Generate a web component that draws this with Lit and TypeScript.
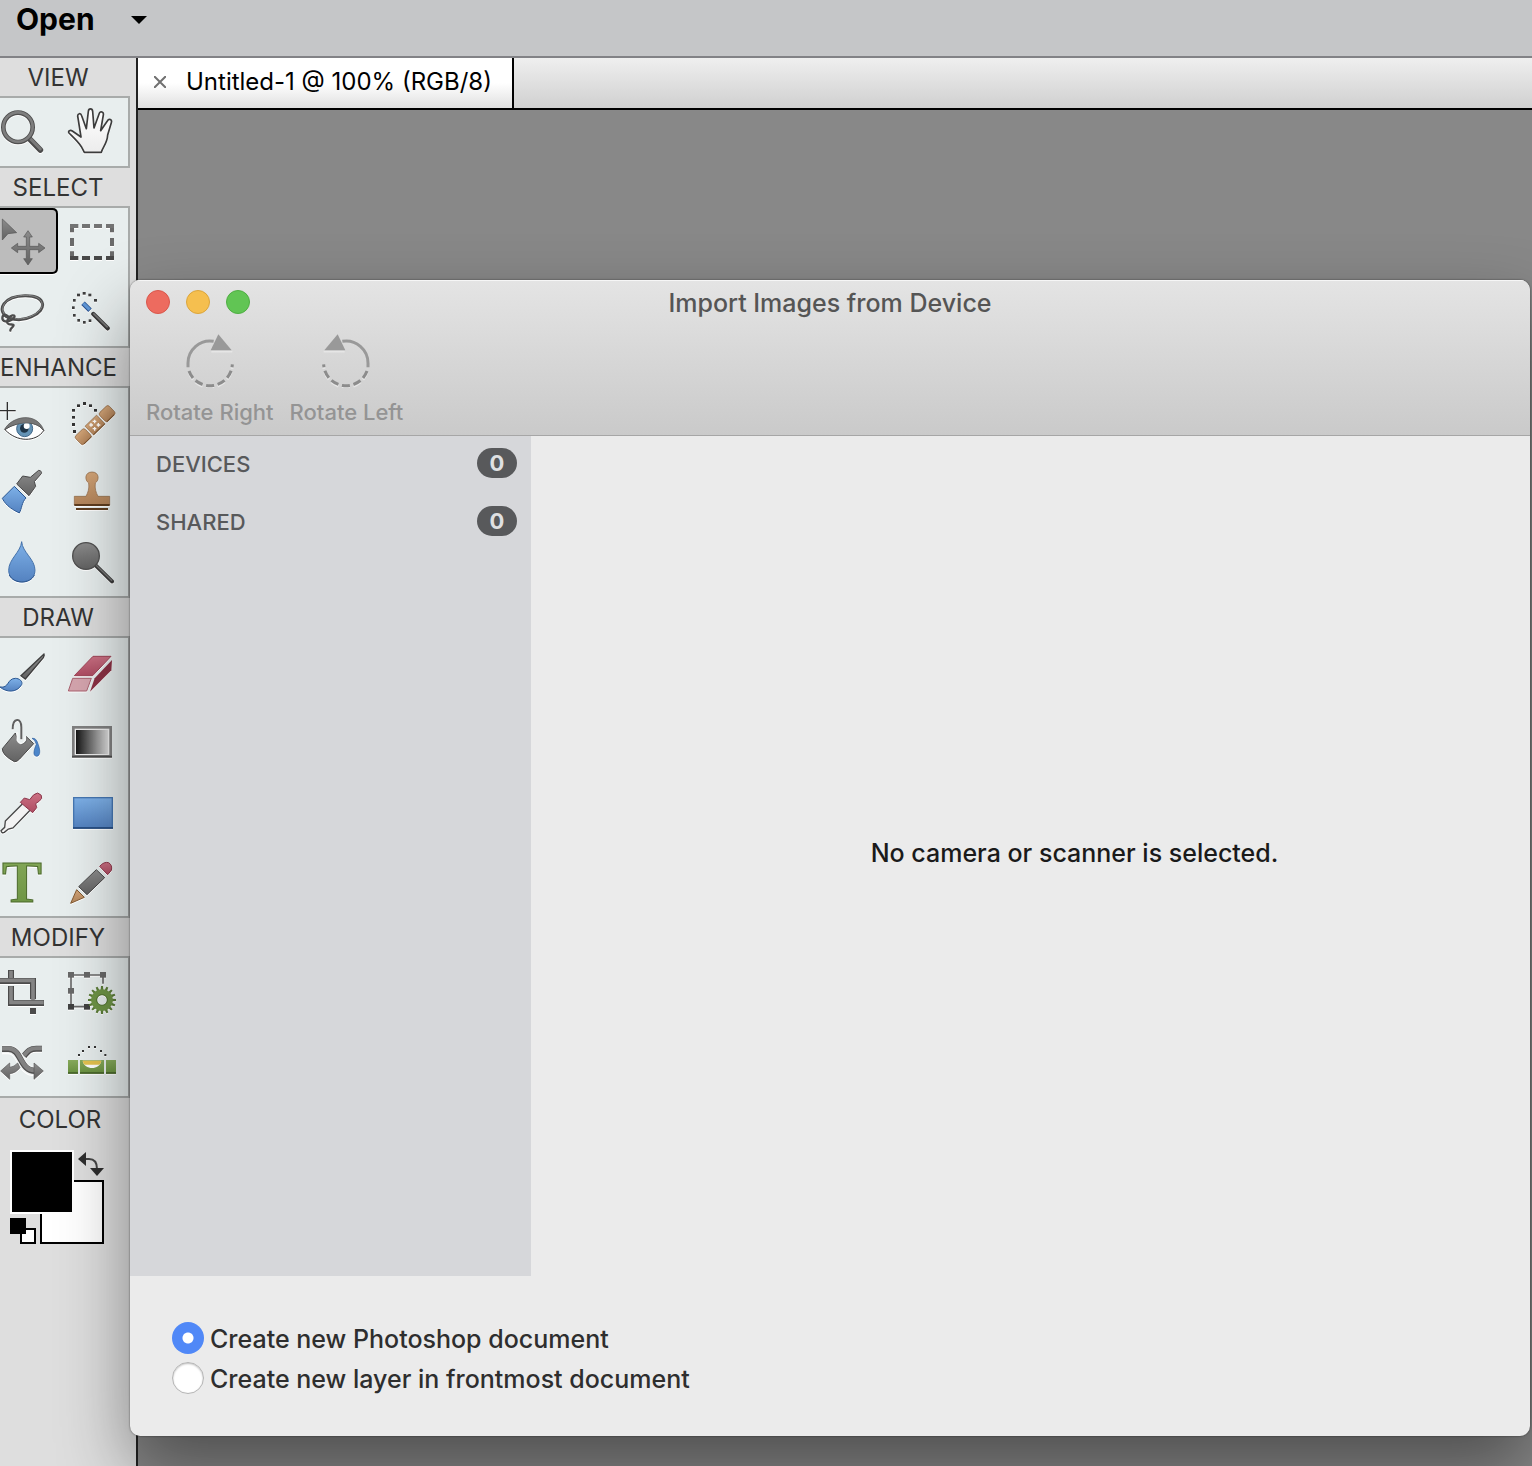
import { LitElement, html, svg, css, TemplateResult, SVGTemplateResult } from "lit";
import { customElement, property, state } from "lit/decorators.js";
import { classMap } from "lit/directives/class-map.js";

interface Tool {
  name: string;
  art: SVGTemplateResult;
}

interface ToolGroup {
  label: string;
  tops: number[];
  tools: Tool[];
}

/* Tool artwork is drawn at three units per pixel. */
const zoomTool = svg`
  <path d="M89 147 L121 180" stroke="#4b4b4b" stroke-width="17" stroke-linecap="round"/>
  <path d="M90 145 L121 177" stroke="#7a7a7a" stroke-width="9" stroke-linecap="round"/>
  <circle cx="54" cy="112" r="44" fill="none" stroke="#4f4f4f" stroke-width="14"/>
  <circle cx="54" cy="111" r="44" fill="none" stroke="#7e7e7e" stroke-width="8"/>`;

const handTool = svg`
  <path fill="url(#paper)" stroke="#3c3c3c" stroke-width="5" stroke-linejoin="round"
    d="M253 187 L244 170 C232 152 219 141 207 129 C203 123 211 119 217 123 L243 141 L233 78 C233 70 242 68 245 77 L259 116 L265 64 C266 54 277 54 278 64 L282 114 L298 70 C301 62 312 66 310 75 L302 122 L322 93 C327 84 337 89 334 98 L323 135 C322 160 308 171 304 187 Z"/>`;

const moveTool = svg`
  <path d="M-20 357 H157 Q171 357 171 371 V535 Q171 549 157 549 H-20 Z" fill="#bcbcbc" stroke="#000" stroke-width="6"/>
  <path d="M7 387 L50 428 L24 431 L7 450 Z" fill="url(#gray)" stroke="#555" stroke-width="2"/>
  <path d="M84 422 L97 441 H89 V469 H116 V460 L135 474 L116 488 V479 H89 V506 H97 L84 525 L71 506 H79 V479 H53 V488 L34 474 L53 460 V469 H79 V441 H71 Z" fill="url(#gray)" stroke="#555" stroke-width="2"/>`;

const marqueeTool = svg`
  <g fill="none" stroke-width="12">
    <path d="M216 402 V427 M216 444 V468 M216 484 V505 M336 402 V427 M336 444 V468 M336 484 V505" stroke="#6a6a6a"/>
    <path d="M210 408 H235 M246 408 H270 M282 408 H306 M318 408 H342" stroke="#737373"/>
    <path d="M210 504 H235 M246 504 H270 M282 504 H306 M318 504 H342" stroke="#484848"/>
  </g>`;

const lassoTool = svg`
  <g fill="none" stroke-linecap="round">
    <path d="M20 680 C-10 660 10 618 75 617 C140 616 143 660 95 680 C70 692 45 690 28 684" stroke="#4d4d4d" stroke-width="9"/>
    <path d="M20 679 C-8 660 12 617 75 616 C138 615 141 658 95 678 C70 690 45 688 28 682" stroke="#858585" stroke-width="3"/>
    <path d="M28 684 C20 672 8 672 7 684 C7 696 22 697 34 690 C47 682 46 675 37 676 C28 678 18 692 23 700 C28 707 44 700 40 708 C37 714 30 716 31 722" stroke="#4d4d4d" stroke-width="7"/>
  </g>`;

const wandTool = svg`
  <g fill="#3e3e3e">
    <rect x="248" y="606" width="9" height="8"/><rect x="265" y="611" width="9" height="8"/><rect x="282" y="627" width="9" height="8"/>
    <rect x="231" y="611" width="9" height="8"/><rect x="219" y="627" width="8" height="8"/><rect x="216" y="649" width="8" height="8"/>
    <rect x="219" y="672" width="8" height="8"/><rect x="232" y="687" width="8" height="8"/><rect x="249" y="693" width="8" height="8"/><rect x="266" y="688" width="8" height="8"/>
  </g>
  <path d="M249 640 L270 661" stroke="#2c5590" stroke-width="15"/><path d="M250 640 L269 659" stroke="#5f96d6" stroke-width="9"/>
  <path d="M280 672 L323 715" stroke="#3b3b3b" stroke-width="13" stroke-linecap="round"/><path d="M280 670 L323 712" stroke="#777" stroke-width="5"/>`;

const eyeTool = svg`
  <path d="M0 197 H47 M22 171 V225" stroke="#2f2f2f" stroke-width="4"/>
  <path d="M15 254 C45 232 105 220 131 257 C108 292 50 292 15 254 Z" fill="#fff" stroke="#333" stroke-width="3"/>
  <circle cx="74" cy="251" r="24" fill="#6493b5" stroke="#41688a" stroke-width="3"/>
  <circle cx="73" cy="250" r="13" fill="#1f3547"/><circle cx="80" cy="243" r="9" fill="#fff"/>
  <path d="M13 254 C35 213 110 198 132 257 C108 224 50 230 13 254 Z" fill="#777" stroke="#555" stroke-width="2"/>`;

const bandageTool = svg`
  <g fill="#333">
    <rect x="249" y="171" width="9" height="9"/><rect x="267" y="178" width="9" height="8"/><rect x="282" y="192" width="9" height="8"/>
    <rect x="231" y="178" width="9" height="8"/><rect x="216" y="192" width="9" height="8"/><rect x="216" y="213" width="9" height="8"/>
    <rect x="216" y="234" width="9" height="9"/><rect x="219" y="255" width="9" height="9"/>
  </g>
  <g transform="translate(285 240) rotate(-44)">
    <rect x="-70" y="-17" width="40" height="35" rx="7" fill="url(#tan)" stroke="#8b6038" stroke-width="2"/>
    <rect x="-24" y="-18" width="48" height="36" fill="url(#tan)" stroke="#8b6038" stroke-width="2"/>
    <rect x="30" y="-17" width="40" height="35" rx="7" fill="url(#tan)" stroke="#8b6038" stroke-width="2"/>
    <path d="M-63 18 H-31 M-24 18 H24 M31 18 H63" stroke="#7d5530" stroke-width="3"/>
  </g>
  <path d="M268 240 H279 M273 234 V245 M290 240 H301 M295 234 V245 M278 229 H289 M284 224 V235 M278 251 H289 M284 246 V257" stroke="#fff" stroke-width="4"/>`;

const smartBrushTool = svg`
  <path d="M116 376 Q127 378 124 386 L103 410 L107 424 L87 452 L50 417 L68 393 L91 397 Z" fill="url(#gray)" stroke="#484848" stroke-width="3"/>
  <path d="M43 424 L78 459 C65 472 66 490 58 504 C42 496 18 484 7 460 Z" fill="url(#blue)" stroke="#29558f" stroke-width="3"/>`;

const stampTool = svg`
  <path d="M276 381 C298 381 299 406 286 414 C284 432 288 442 294 454 H329 V480 H223 V454 H258 C264 442 268 432 266 414 C253 406 254 381 276 381 Z" fill="url(#tan)" stroke="#8a6240" stroke-width="2"/>
  <path d="M223 480 H329 M228 492 H324" stroke="#5f3d1f" stroke-width="6"/>`;

const dropTool = svg`
  <path d="M65 590 C67 622 105 642 105 676 C105 722 26 722 26 676 C26 642 62 622 65 590 Z" fill="url(#blue)" stroke="#416fa8" stroke-width="3"/>
  <path d="M28 690 C40 718 92 718 103 690" fill="none" stroke="#29538c" stroke-width="3"/>`;

const dodgeTool = svg`
  <path d="M284 658 L336 709" stroke="#3b3b3b" stroke-width="12" stroke-linecap="round"/><path d="M284 656 L336 707" stroke="#777" stroke-width="4"/>
  <circle cx="258" cy="633" r="40" fill="url(#gray)" stroke="#505050" stroke-width="4"/>`;

const brushTool = svg`
  <path d="M132 162 Q134 165 130 173 L76 237 L63 227 Z" fill="url(#gray)" stroke="#3e3e3e" stroke-width="4"/>
  <path d="M0 261 C28 266 20 236 46 235 C58 235 69 244 65 254 C50 280 18 277 0 261 Z" fill="url(#blue)" stroke="#29558f" stroke-width="3"/>`;

const eraserTool = svg`
  <path d="M279 169 H333 L278 227 H223 Z" fill="url(#rose)" stroke="#9e4355" stroke-width="3"/>
  <path d="M218 235 H274 L260 273 H205 Z" fill="#d5a5ae" stroke="#a8606e" stroke-width="3"/>
  <path d="M336 180 L284 235 L270 275 L334 211 Z" fill="#8c3144"/>`;

const bucketTool = svg`
  <path d="M46 399 L7 446 Q6 465 43 485 Q51 486 59 477 L101 431 L78 409 V424 Q64 440 54 424 Z" fill="url(#gray)" stroke="#474747" stroke-width="3"/>
  <path d="M52 396 V420 Q63 440 76 420 V408" fill="none" stroke="#f3f6f6" stroke-width="5"/>
  <path d="M38 388 C38 352 65 352 64 382 V418" fill="none" stroke="#606060" stroke-width="6"/>
  <path d="M96 415 Q109 413 114 432 C120 447 123 468 110 469 C96 468 103 447 109 433 Q106 421 96 415 Z" fill="#4c86ca" stroke="#2c5c9b" stroke-width="2"/>`;

const gradientTool = svg`
  <rect x="220" y="382" width="112" height="87" fill="#eee" stroke="#808080" stroke-width="8"/>
  <path d="M216 470 H336" stroke="#4c4c4c" stroke-width="5"/>
  <rect x="228" y="390" width="96" height="72" fill="url(#ramp)"/>`;

const eyedropperTool = svg`
  <path d="M67 612 L16 663 L14 682 L3 692 Q5 701 13 697 L25 687 L39 684 L90 631" fill="#f3f3f3" stroke="#454545" stroke-width="4"/>
  <path d="M61 607 L73 594 L89 599 Q101 580 113 579 Q128 584 125 595 Q120 604 107 611 L110 623 L98 638 Z" fill="url(#rose)" stroke="#89364a" stroke-width="3"/>`;

const shapeTool = svg`
  <rect x="221" y="593" width="116" height="91" fill="url(#blue)" stroke="#4677b2" stroke-width="4"/>
  <path d="M219 684 H339" stroke="#1f4378" stroke-width="5"/>`;

const typeTool = svg`<text x="66" y="906" text-anchor="middle" class="type-letter" fill="url(#green)">T</text>`;

const pencilTool = svg`
  <path d="M299 799 Q312 784 326 788 Q338 796 334 811 L323 824 Z" fill="url(#rose)" stroke="#8e3549" stroke-width="3"/>
  <path d="M289 809 L314 833 L261 884 L236 860 Z" fill="url(#gray)" stroke="#454545" stroke-width="3"/>
  <path d="M230 869 L253 892 L212 910 Z" fill="url(#tan)" stroke="#82592f" stroke-width="3"/>`;

const cropTool = svg`
  <g fill="none" stroke="#4b4b4b" stroke-width="18"><path d="M33 165 V189 M0 198 H99 V253 M33 213 V264 H132 M90 288 H108"/></g>
  <g fill="none" stroke="#848484" stroke-width="11"><path d="M33 167 V189 M0 196 H99 V255 M33 214 V262 H131"/></g>`;

const gearTeeth = Array.from({ length: 16 }, (_, i) => i * 22.5);
const recomposeTool = svg`
  <path d="M213 180 H309 V206 M213 180 V275 H262" fill="none" stroke="#686868" stroke-width="5"/>
  <g fill="#686868"><rect x="204" y="171" width="18" height="17"/><rect x="252" y="171" width="18" height="17"/><rect x="300" y="171" width="18" height="17"/><rect x="204" y="219" width="18" height="17"/></g>
  <g fill="#414141"><rect x="204" y="267" width="18" height="17"/><rect x="252" y="267" width="18" height="17"/></g>
  ${gearTeeth.map((a) => svg`<path d="M302 226 L303 213 H309 L310 226 Z" fill="#5c7d39" transform="rotate(${a} 306 255)"/>`)}
  <circle cx="306" cy="255" r="24" fill="none" stroke="#6e9446" stroke-width="17"/>
  <circle cx="306" cy="255" r="16" fill="none" stroke="#4f702e" stroke-width="3"/>`;

const moveAwareTool = svg`
  <path d="M126 401 H109 C88 401 82 411 72 423" fill="none" stroke="#4e4e4e" stroke-width="18"/>
  <path d="M126 400 H109 C88 400 82 410 72 421" fill="none" stroke="#828282" stroke-width="12"/>
  <path d="M6 402 H25 C66 402 58 468 106 468" fill="none" stroke="#f0f3f3" stroke-width="26"/>
  <path d="M6 402 H25 C66 402 58 468 106 468" fill="none" stroke="#4e4e4e" stroke-width="18"/>
  <path d="M6 400 H25 C66 400 58 466 106 466" fill="none" stroke="#828282" stroke-width="13"/>
  <path d="M102 444 L130 468 L102 493 Z" fill="url(#gray)" stroke="#555" stroke-width="2"/>
  <path d="M29 444 V457 Q43 456 53 444 L60 458 Q48 474 29 476 V493 L2 468 Z" fill="url(#gray)" stroke="#555" stroke-width="2"/>`;

const straightenTool = svg`
  <g fill="#333"><rect x="234" y="417" width="6" height="6"/><rect x="246" y="405" width="6" height="6"/><rect x="264" y="393" width="6" height="6"/><rect x="282" y="393" width="6" height="6"/><rect x="300" y="405" width="6" height="6"/><rect x="313" y="417" width="6" height="6"/></g>
  <g fill="url(#green)"><rect x="204" y="435" width="30" height="41"/><rect x="240" y="435" width="72" height="41"/><rect x="318" y="435" width="30" height="41"/></g>
  <path d="M204 474 H234 M240 474 H312 M318 474 H348" stroke="#435f27" stroke-width="5"/>
  <path d="M248 437 H304 C299 466 253 466 248 437 Z" fill="#fff"/>
  <path d="M248 437 H304 Q303 446 298 449 H254 Q249 444 248 437 Z" fill="#e5c34f"/>`;

const groups: ToolGroup[] = [
  { label: "VIEW", tops: [24], tools: [{ name: "Zoom", art: zoomTool }, { name: "Hand", art: handTool }] },
  {
    label: "SELECT",
    tops: [354, 564],
    tools: [
      { name: "Move", art: moveTool },
      { name: "Marquee", art: marqueeTool },
      { name: "Lasso", art: lassoTool },
      { name: "Quick Selection", art: wandTool },
    ],
  },
  {
    label: "ENHANCE",
    tops: [129, 339, 549],
    tools: [
      { name: "Red Eye Removal", art: eyeTool },
      { name: "Spot Healing", art: bandageTool },
      { name: "Smart Brush", art: smartBrushTool },
      { name: "Clone Stamp", art: stampTool },
      { name: "Blur", art: dropTool },
      { name: "Dodge", art: dodgeTool },
    ],
  },
  {
    label: "DRAW",
    tops: [114, 324, 534, 744],
    tools: [
      { name: "Brush", art: brushTool },
      { name: "Eraser", art: eraserTool },
      { name: "Paint Bucket", art: bucketTool },
      { name: "Gradient", art: gradientTool },
      { name: "Color Picker", art: eyedropperTool },
      { name: "Shape", art: shapeTool },
      { name: "Type", art: typeTool },
      { name: "Pencil", art: pencilTool },
    ],
  },
  {
    label: "MODIFY",
    tops: [129, 339],
    tools: [
      { name: "Crop", art: cropTool },
      { name: "Recompose", art: recomposeTool },
      { name: "Content-Aware Move", art: moveAwareTool },
      { name: "Straighten", art: straightenTool },
    ],
  },
];

@customElement("tool-panel")
export class ToolPanel extends LitElement {
  static styles = css`
    :host { display: block; background: #dedede; border-right: 2px solid #222; box-sizing: border-box; font-family: Inter, "Liberation Sans", sans-serif; }
    button { appearance: none; border: 0; padding: 0; margin: 0; background: none; font: inherit; }
    svg { display: block; }
    .defs { position: absolute; width: 0; height: 0; }
    .label { margin: 0; padding-right: 20px; height: 38px; line-height: 40px; font-size: 24px; font-weight: 400; text-align: center; color: #333; }
    .label.color { height: 42px; line-height: 44px; padding-right: 16px; }
    .tools { display: grid; grid-template-columns: 58px 70px; grid-auto-rows: 68px; row-gap: 2px; margin-right: 6px; border: 2px solid #a8abaa; border-left: 0; background: #e8eeee; overflow: hidden; }
    .tool { display: block; height: 68px; }
    .tool svg { width: 100%; height: 68px; filter: drop-shadow(0 1px 0 #fff); }
    .type-letter { font: bold 180px "Liberation Serif", serif; stroke: #4b692c; stroke-width: 3px; }
    .swatches { position: relative; height: 94px; margin: 10px 26px 0 10px; }
    .swatches button { position: absolute; box-sizing: border-box; }
    .background { left: 30px; top: 30px; width: 64px; height: 64px; border: 2px solid #000; background: #fff; }
    .foreground { left: 0; top: 0; width: 64px; height: 64px; border: 2px solid #fff; background: #000; }
    .swap { left: 67px; top: 0; width: 28px; height: 28px; }
    .reset { left: 0; top: 68px; width: 26px; height: 26px; }
  `;

  private renderTool(tool: Tool, index: number, tops: number[]): TemplateResult {
    const right = index % 2 === 1;
    const top = tops[Math.floor(index / 2)];
    const box = right ? `174 ${top} 210 204` : `0 ${top} 174 204`;
    return html`<button class="tool" type="button" aria-label=${tool.name}>
      <svg viewBox=${box} fill="none" aria-hidden="true">${tool.art}</svg>
    </button>`;
  }

  render() {
    return html`
      <svg class="defs" aria-hidden="true">
        <defs>
          <linearGradient id="gray" x2="0" y2="1"><stop offset="0" stop-color="#8c8c8c"/><stop offset="1" stop-color="#626262"/></linearGradient>
          <linearGradient id="paper" x2="0" y2="1"><stop offset="0" stop-color="#fff"/><stop offset="1" stop-color="#ececec"/></linearGradient>
          <linearGradient id="blue" x2="0" y2="1"><stop offset="0" stop-color="#7eb1e8"/><stop offset="1" stop-color="#5482c0"/></linearGradient>
          <linearGradient id="tan" x2="0" y2="1"><stop offset="0" stop-color="#d3a578"/><stop offset="1" stop-color="#b3845a"/></linearGradient>
          <linearGradient id="rose" x2="0" y2="1"><stop offset="0" stop-color="#cc7184"/><stop offset="1" stop-color="#ae4c62"/></linearGradient>
          <linearGradient id="green" x2="0" y2="1"><stop offset="0" stop-color="#88ab5c"/><stop offset="1" stop-color="#68903f"/></linearGradient>
          <linearGradient id="ramp"><stop offset="0" stop-color="#151515"/><stop offset="1" stop-color="#dcdcdc"/></linearGradient>
        </defs>
      </svg>
      ${groups.map(
        (g) => html`
          <h2 class="label">${g.label}</h2>
          <div class="tools">${g.tools.map((t, i) => this.renderTool(t, i, g.tops))}</div>
        `
      )}
      <h2 class="label color">COLOR</h2>
      <div class="swatches">
        <button class="background" type="button" aria-label="Background color"></button>
        <button class="foreground" type="button" aria-label="Foreground color"></button>
        <button class="swap" type="button" aria-label="Swap colors">
          <svg width="28" height="28" viewBox="0 0 28 28">
            <path d="M7 9 H12 Q20 9 20 19" fill="none" stroke="#444" stroke-width="2"/>
            <path d="M1 9 L9 2 V16 Z M13 18 H27 L20 26 Z" fill="#2e2e2e"/>
          </svg>
        </button>
        <button class="reset" type="button" aria-label="Default colors">
          <svg width="26" height="26" viewBox="0 0 26 26">
            <rect x="11" y="11" width="14" height="14" fill="#fff" stroke="#000" stroke-width="2"/>
            <rect width="16" height="16" fill="#000"/>
          </svg>
        </button>
      </div>
    `;
  }
}

@customElement("import-window")
export class ImportWindow extends LitElement {
  @property() heading = "";
  @state() private target = "document";

  static styles = css`
    :host { display: flex; flex-direction: column; border-radius: 10px; overflow: hidden; background: #ebebeb; box-shadow: 0 0 2px rgba(0, 0, 0, 0.6), 0 32px 70px rgba(0, 0, 0, 0.42); font-family: Inter, "Liberation Sans", sans-serif; }
    button { appearance: none; border: 0; padding: 0; margin: 0; background: none; font: inherit; color: inherit; }
    svg { display: block; }
    .head { height: 156px; box-sizing: border-box; border-bottom: 1px solid #a6a6a6; background: linear-gradient(#e4e4e4, #cacaca); box-shadow: inset 0 1px 0 #f6f6f6; }
    .titlebar { display: grid; grid-template-columns: 1fr auto 1fr; align-items: center; height: 46px; padding: 0 16px; }
    .lights { display: flex; gap: 16px; padding-bottom: 2px; }
    .light { width: 24px; height: 24px; border-radius: 50%; box-sizing: border-box; border: 1px solid; }
    .close { background: #ed6b5f; border-color: #d9574c; }
    .minimize { background: #f5bf4f; border-color: #dba53c; }
    .zoom { background: #61c554; border-color: #4fae43; }
    .title { margin: 0; font-size: 25px; line-height: 32px; font-weight: 500; color: #555; }
    .toolbar { display: flex; gap: 16px; padding: 6px 16px 0; color: #949494; font-size: 22px; line-height: 28px; font-weight: 500; }
    .rotate { display: flex; flex-direction: column; align-items: center; gap: 10px; }
    .body { flex: 1; display: flex; }
    .sources { flex: none; width: 401px; box-sizing: border-box; padding: 12px 14px 0 26px; background: #d6d7da; }
    .source { display: flex; justify-content: space-between; align-items: center; height: 30px; margin-bottom: 28px; line-height: 28px; font-size: 22px; font-weight: 500; color: #58595b; }
    .name { padding-top: 2px; }
    .count { width: 40px; height: 30px; border-radius: 15px; line-height: 30px; text-align: center; font-weight: 700; color: #dfe0e2; background: #58595b; }
    .preview { flex: 1; display: flex; align-items: center; justify-content: center; padding: 0 0 6px 88px; }
    .message { margin: 0; font-size: 25px; line-height: 32px; font-weight: 500; color: #1a1a1a; }
    .options { height: 160px; box-sizing: border-box; padding: 42px 42px 0; }
    .option { display: flex; align-items: center; gap: 6px; height: 40px; font-size: 25px; font-weight: 500; color: #2e2e2e; }
    .caption { padding-top: 2px; }
    .radio { appearance: none; flex: none; width: 32px; height: 32px; margin: 0; border-radius: 50%; background: #fff; border: 1px solid #b5b5b5; box-shadow: inset 0 1px 2px rgba(0, 0, 0, 0.25); }
    .radio:checked { border: 0; background: radial-gradient(circle, #fff 0 5px, #5088f7 6px); box-shadow: none; }
  `;

  private renderRotate(label: string, mirrored: boolean) {
    return html`<button class="rotate" type="button" disabled>
      <svg width="56" height="56" viewBox="0 0 168 168" fill="none" aria-hidden="true">
        <g transform=${mirrored ? "translate(168 0) scale(-1 1)" : ""}>
          <path d="M21 122 A67 67 0 0 0 151 102" stroke="#e6e6e6" stroke-width="8" stroke-dasharray="24 11"/>
          <path d="M88 59 H151" stroke="#e6e6e6" stroke-width="5"/>
          <path d="M18 106 V94 A66 66 0 0 1 95 28" stroke="#999" stroke-width="9"/>
          <path d="M21 117 A67 67 0 0 0 151 97" stroke="#8c8c8c" stroke-width="9" stroke-dasharray="24 11"/>
          <path d="M109 7 L149 55 H86 Z" fill="#999"/>
        </g>
      </svg>
      <span>${label}</span>
    </button>`;
  }

  private renderOption(value: string, label: string) {
    return html`<label class="option">
      <input class="radio" type="radio" name="target" .value=${value} ?checked=${this.target === value} @change=${() => (this.target = value)} />
      <span class="caption">${label}</span>
    </label>`;
  }

  render() {
    const lights = ["close", "minimize", "zoom"];
    return html`
      <header class="head">
        <div class="titlebar">
          <div class="lights">
            ${lights.map((l) => html`<button type="button" aria-label=${l} class=${classMap({ light: true, [l]: true })}></button>`)}
          </div>
          <h1 class="title">${this.heading}</h1>
        </div>
        <div class="toolbar">${this.renderRotate("Rotate Right", false)}${this.renderRotate("Rotate Left", true)}</div>
      </header>
      <div class="body">
        <aside class="sources">
          ${["DEVICES", "SHARED"].map((s) => html`<div class="source"><span class="name">${s}</span><span class="count">0</span></div>`)}
        </aside>
        <main class="preview"><p class="message">No camera or scanner is selected.</p></main>
      </div>
      <footer class="options">
        ${this.renderOption("document", "Create new Photoshop document")}
        ${this.renderOption("layer", "Create new layer in frontmost document")}
      </footer>
    `;
  }
}

@customElement("app-root")
export class AppRoot extends LitElement {
  static styles = css`
    :host { display: flex; flex-direction: column; position: relative; min-height: 100vh; overflow: hidden; background: #888; font-family: Inter, "Liberation Sans", sans-serif; }
    button { appearance: none; border: 0; padding: 0; margin: 0; background: none; font: inherit; color: inherit; }
    svg { display: block; }
    .topbar { flex: none; height: 58px; box-sizing: border-box; border-bottom: 2px solid #828286; background: #c5c6c8; padding-left: 16px; }
    .open { display: flex; align-items: center; gap: 36px; height: 40px; font-size: 30px; line-height: 36px; font-weight: 700; color: #000; }
    .open-label { padding-bottom: 2px; }
    .workspace { flex: 1; display: flex; }
    .panel { flex: none; width: 138px; }
    .documents { flex: 1; }
    .tabs { display: flex; height: 52px; box-sizing: border-box; border-bottom: 2px solid #000; background: linear-gradient(#efefef, #d0d0d0); }
    .tab { display: flex; align-items: center; gap: 20px; padding: 0 20px 2px 16px; border-right: 2px solid #000; background: linear-gradient(#fff 50%, #e0e0e0); font-size: 24px; color: #000; }
    .tab-name { padding-bottom: 2px; }
    .import { position: absolute; top: 280px; right: 2px; bottom: 30px; left: 130px; }
  `;

  render() {
    return html`
      <header class="topbar">
        <button class="open" type="button">
          <span class="open-label">Open</span>
          <svg width="16" height="8" viewBox="0 0 16 8" aria-hidden="true"><path d="M0 0 H16 L8 8 Z"/></svg>
        </button>
      </header>
      <div class="workspace">
        <tool-panel class="panel"></tool-panel>
        <div class="documents">
          <div class="tabs">
            <div class="tab">
              <button type="button" aria-label="Close tab">
                <svg width="12" height="12" viewBox="0 0 12 12"><path d="M0 0 L12 12 M12 0 L0 12" stroke="#707070" stroke-width="2"/></svg>
              </button>
              <span class="tab-name">Untitled-1 @ 100% (RGB/8)</span>
            </div>
          </div>
        </div>
      </div>
      <import-window class="import" heading="Import Images from Device"></import-window>
    `;
  }
}
